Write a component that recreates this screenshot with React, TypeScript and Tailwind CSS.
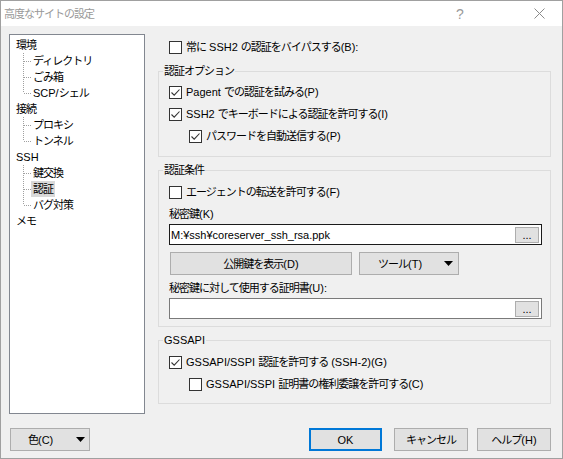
import React from 'react';

const CJK_RUN = /[\u3000-\u30ff\u3400-\u9fff]+|[^\u3000-\u30ff\u3400-\u9fff]+/g;
const CJK_TEST = /[\u3000-\u30ff\u3400-\u9fff]/;

function J({ t }: { t: string }) {
  const parts = t.match(CJK_RUN) || [];
  return (
    <>
      {parts.map((p, i) =>
        CJK_TEST.test(p) ? (
          <span key={i} className="tracking-[-1px]">
            {p}
          </span>
        ) : (
          <span key={i}>{p}</span>
        )
      )}
    </>
  );
}

function Check({ checked }: { checked?: boolean }) {
  return (
    <span className="w-[13px] h-[13px] border border-[#333333] bg-white flex items-center justify-center shrink-0">
      {checked && (
        <svg width="11" height="11" viewBox="0 0 11 11">
          <path d="M1.5 5.5 L4.2 8.2 L9.5 2.5" stroke="#333333" strokeWidth="1.1" fill="none" />
        </svg>
      )}
    </span>
  );
}

function CheckRow({ t, checked, indent }: { t: string; checked?: boolean; indent?: boolean }) {
  return (
    <div className={indent ? 'h-[22px] flex items-center gap-[4px] pl-[20px]' : 'h-[22px] flex items-center gap-[4px]'}>
      <Check checked={checked} />
      <span className="leading-[14px] whitespace-nowrap">
        <J t={t} />
      </span>
    </div>
  );
}

function Arrow() {
  return (
    <svg width="9" height="5" viewBox="0 0 9 5" className="shrink-0">
      <path d="M0 0 H9 L4.5 5 Z" fill="#000" />
    </svg>
  );
}

function Group({ label, children, className }: { label: string; children: React.ReactNode; className: string }) {
  return (
    <fieldset className={'border border-[#dcdcdc] ' + className}>
      <legend className="ml-[-6px] px-[1px] h-[14px] leading-[14px] whitespace-nowrap">
        <J t={label} />
      </legend>
      {children}
    </fieldset>
  );
}

const tree: { t: string; children: string[] }[] = [
  { t: '環境', children: ['ディレクトリ', 'ごみ箱', 'SCP/シェル'] },
  { t: '接続', children: ['プロキシ', 'トンネル'] },
  { t: 'SSH', children: ['鍵交換', '認証', 'バグ対策'] },
  { t: 'メモ', children: [] },
];

function Tree() {
  return (
    <div className="w-[136px] h-[380px] border border-[#828790] bg-white pt-[2px] shrink-0">
      {tree.map((n) => (
        <div key={n.t}>
          <div className="h-[16px] flex items-center pl-[6px] leading-[16px] whitespace-nowrap">
            <J t={n.t} />
          </div>
          {n.children.map((c, i) => {
            const last = i === n.children.length - 1;
            const sel = c === '認証';
            return (
              <div key={c} className="h-[16px] flex items-center pl-[13px]">
                <svg width="8" height="16" className="shrink-0">
                  <line x1="0.5" y1="0" x2="0.5" y2={last ? 8 : 16} stroke="#a0a0a0" strokeDasharray="1 1" />
                  <line x1="1" y1="8.5" x2="8" y2="8.5" stroke="#a0a0a0" strokeDasharray="1 1" />
                </svg>
                <span
                  className={
                    sel
                      ? 'h-[16px] leading-[16px] px-[2px] bg-[#d9d9d9] whitespace-nowrap'
                      : 'h-[16px] leading-[16px] px-[2px] whitespace-nowrap'
                  }
                >
                  <J t={c} />
                </span>
              </div>
            );
          })}
        </div>
      ))}
    </div>
  );
}

function PathInput({ value, dark }: { value: string; dark?: boolean }) {
  return (
    <div
      className={
        dark
          ? 'w-[373px] h-[21px] border border-[#1b1b1b] bg-white flex items-center pl-[1px] pr-[2px]'
          : 'w-[373px] h-[21px] border border-[#7a7a7a] bg-white flex items-center pl-[1px] pr-[2px]'
      }
    >
      <span className="flex-1 leading-[14px] whitespace-nowrap">{value}</span>
      <div className="w-[24px] h-[16px] bg-[#e1e1e1] border border-[#adadad] flex items-end justify-center leading-[12px] text-[11px] pb-[1px]">
        ...
      </div>
    </div>
  );
}

export default function App() {
  return (
    <div className="w-[563px] h-[459px] bg-[#f0f0f0] border border-[#a0a0a0] text-[11px] text-black font-['Liberation_Sans','Noto_Sans_CJK_JP',sans-serif] flex flex-col overflow-hidden">
      {/* title bar */}
      <div className="h-[25px] bg-white flex items-center pl-[3px] shrink-0">
        <span className="text-[#999999] leading-[14px] whitespace-nowrap">
          <J t="高度なサイトの設定" />
        </span>
        <div className="ml-auto flex items-center mr-[17px]">
          <span className="w-[20px] text-center text-[14px] text-[#9a9a9a] leading-[16px]">?</span>
          <span className="w-[64px]" />
          <svg width="11" height="11" viewBox="0 0 11 11">
            <path d="M0.5 0.5 L10.5 10.5 M10.5 0.5 L0.5 10.5" stroke="#8a8a8a" strokeWidth="1" />
          </svg>
        </div>
      </div>

      {/* body */}
      <div className="flex flex-col px-[8px] pt-[8px]">
        <div className="flex gap-[13px]">
          <Tree />
          <div className="w-[393px] flex flex-col pt-[2px]">
            <div className="pl-[11px]">
              <CheckRow t="常に SSH2 の認証をバイパスする(B):" />
            </div>

            <Group label="認証オプション" className="mt-[6px] pl-[10px] pt-[3px] pb-[9px]">
              <CheckRow t="Pagent での認証を試みる(P)" checked />
              <CheckRow t="SSH2 でキーボードによる認証を許可する(I)" checked />
              <CheckRow t="パスワードを自動送信する(P)" checked indent />
            </Group>

            <Group label="認証条件" className="mt-[6px] pl-[10px] pt-[4px] pb-[7px]">
              <CheckRow t="エージェントの転送を許可する(F)" />
              <div className="h-[21px] flex items-center leading-[14px]">
                <J t="秘密鍵(K)" />
              </div>
              <PathInput value="M:¥ssh¥coreserver_ssh_rsa.ppk" dark />
              <div className="flex mt-[7px] ml-[1px] gap-[7px]">
                <div className="w-[182px] h-[23px] bg-[#e1e1e1] border border-[#adadad] flex items-center justify-center leading-[14px] whitespace-nowrap">
                  <J t="公開鍵を表示(D)" />
                </div>
                <div className="w-[100px] h-[23px] bg-[#e1e1e1] border border-[#adadad] flex items-center pl-[18px] pr-[5px] leading-[14px] whitespace-nowrap">
                  <span>
                    <J t="ツール(T)" />
                  </span>
                  <span className="ml-auto">
                    <Arrow />
                  </span>
                </div>
              </div>
              <div className="h-[20px] mt-[3px] flex items-center leading-[14px] whitespace-nowrap">
                <J t="秘密鍵に対して使用する証明書(U):" />
              </div>
              <PathInput value="" />
            </Group>

            <Group label="GSSAPI" className="mt-[6px] pl-[10px] pt-[4px] pb-[8px]">
              <CheckRow t="GSSAPI/SSPI 認証を許可する (SSH-2)(G)" checked />
              <CheckRow t="GSSAPI/SSPI 証明書の権利委譲を許可する(C)" indent />
            </Group>
          </div>
        </div>

        {/* bottom buttons */}
        <div className="flex items-center mt-[14px]">
          <div className="ml-[1px] w-[80px] h-[23px] bg-[#e1e1e1] border border-[#adadad] flex items-center pl-[17px] pr-[4px] leading-[14px] whitespace-nowrap">
            <span>
              <J t="色(C)" />
            </span>
            <span className="ml-auto">
              <Arrow />
            </span>
          </div>
          <div className="ml-[219px] w-[73px] h-[23px] bg-[#e1e1e1] border-2 border-[#0078d7] flex items-center justify-center leading-[14px]">
            OK
          </div>
          <div className="ml-[12px] w-[74px] h-[23px] bg-[#e1e1e1] border border-[#adadad] flex items-center justify-center leading-[14px] whitespace-nowrap">
            <J t="キャンセル" />
          </div>
          <div className="ml-[9px] w-[74px] h-[23px] bg-[#e1e1e1] border border-[#adadad] flex items-center justify-center leading-[14px] whitespace-nowrap">
            <J t="ヘルプ(H)" />
          </div>
        </div>
      </div>
    </div>
  );
}
